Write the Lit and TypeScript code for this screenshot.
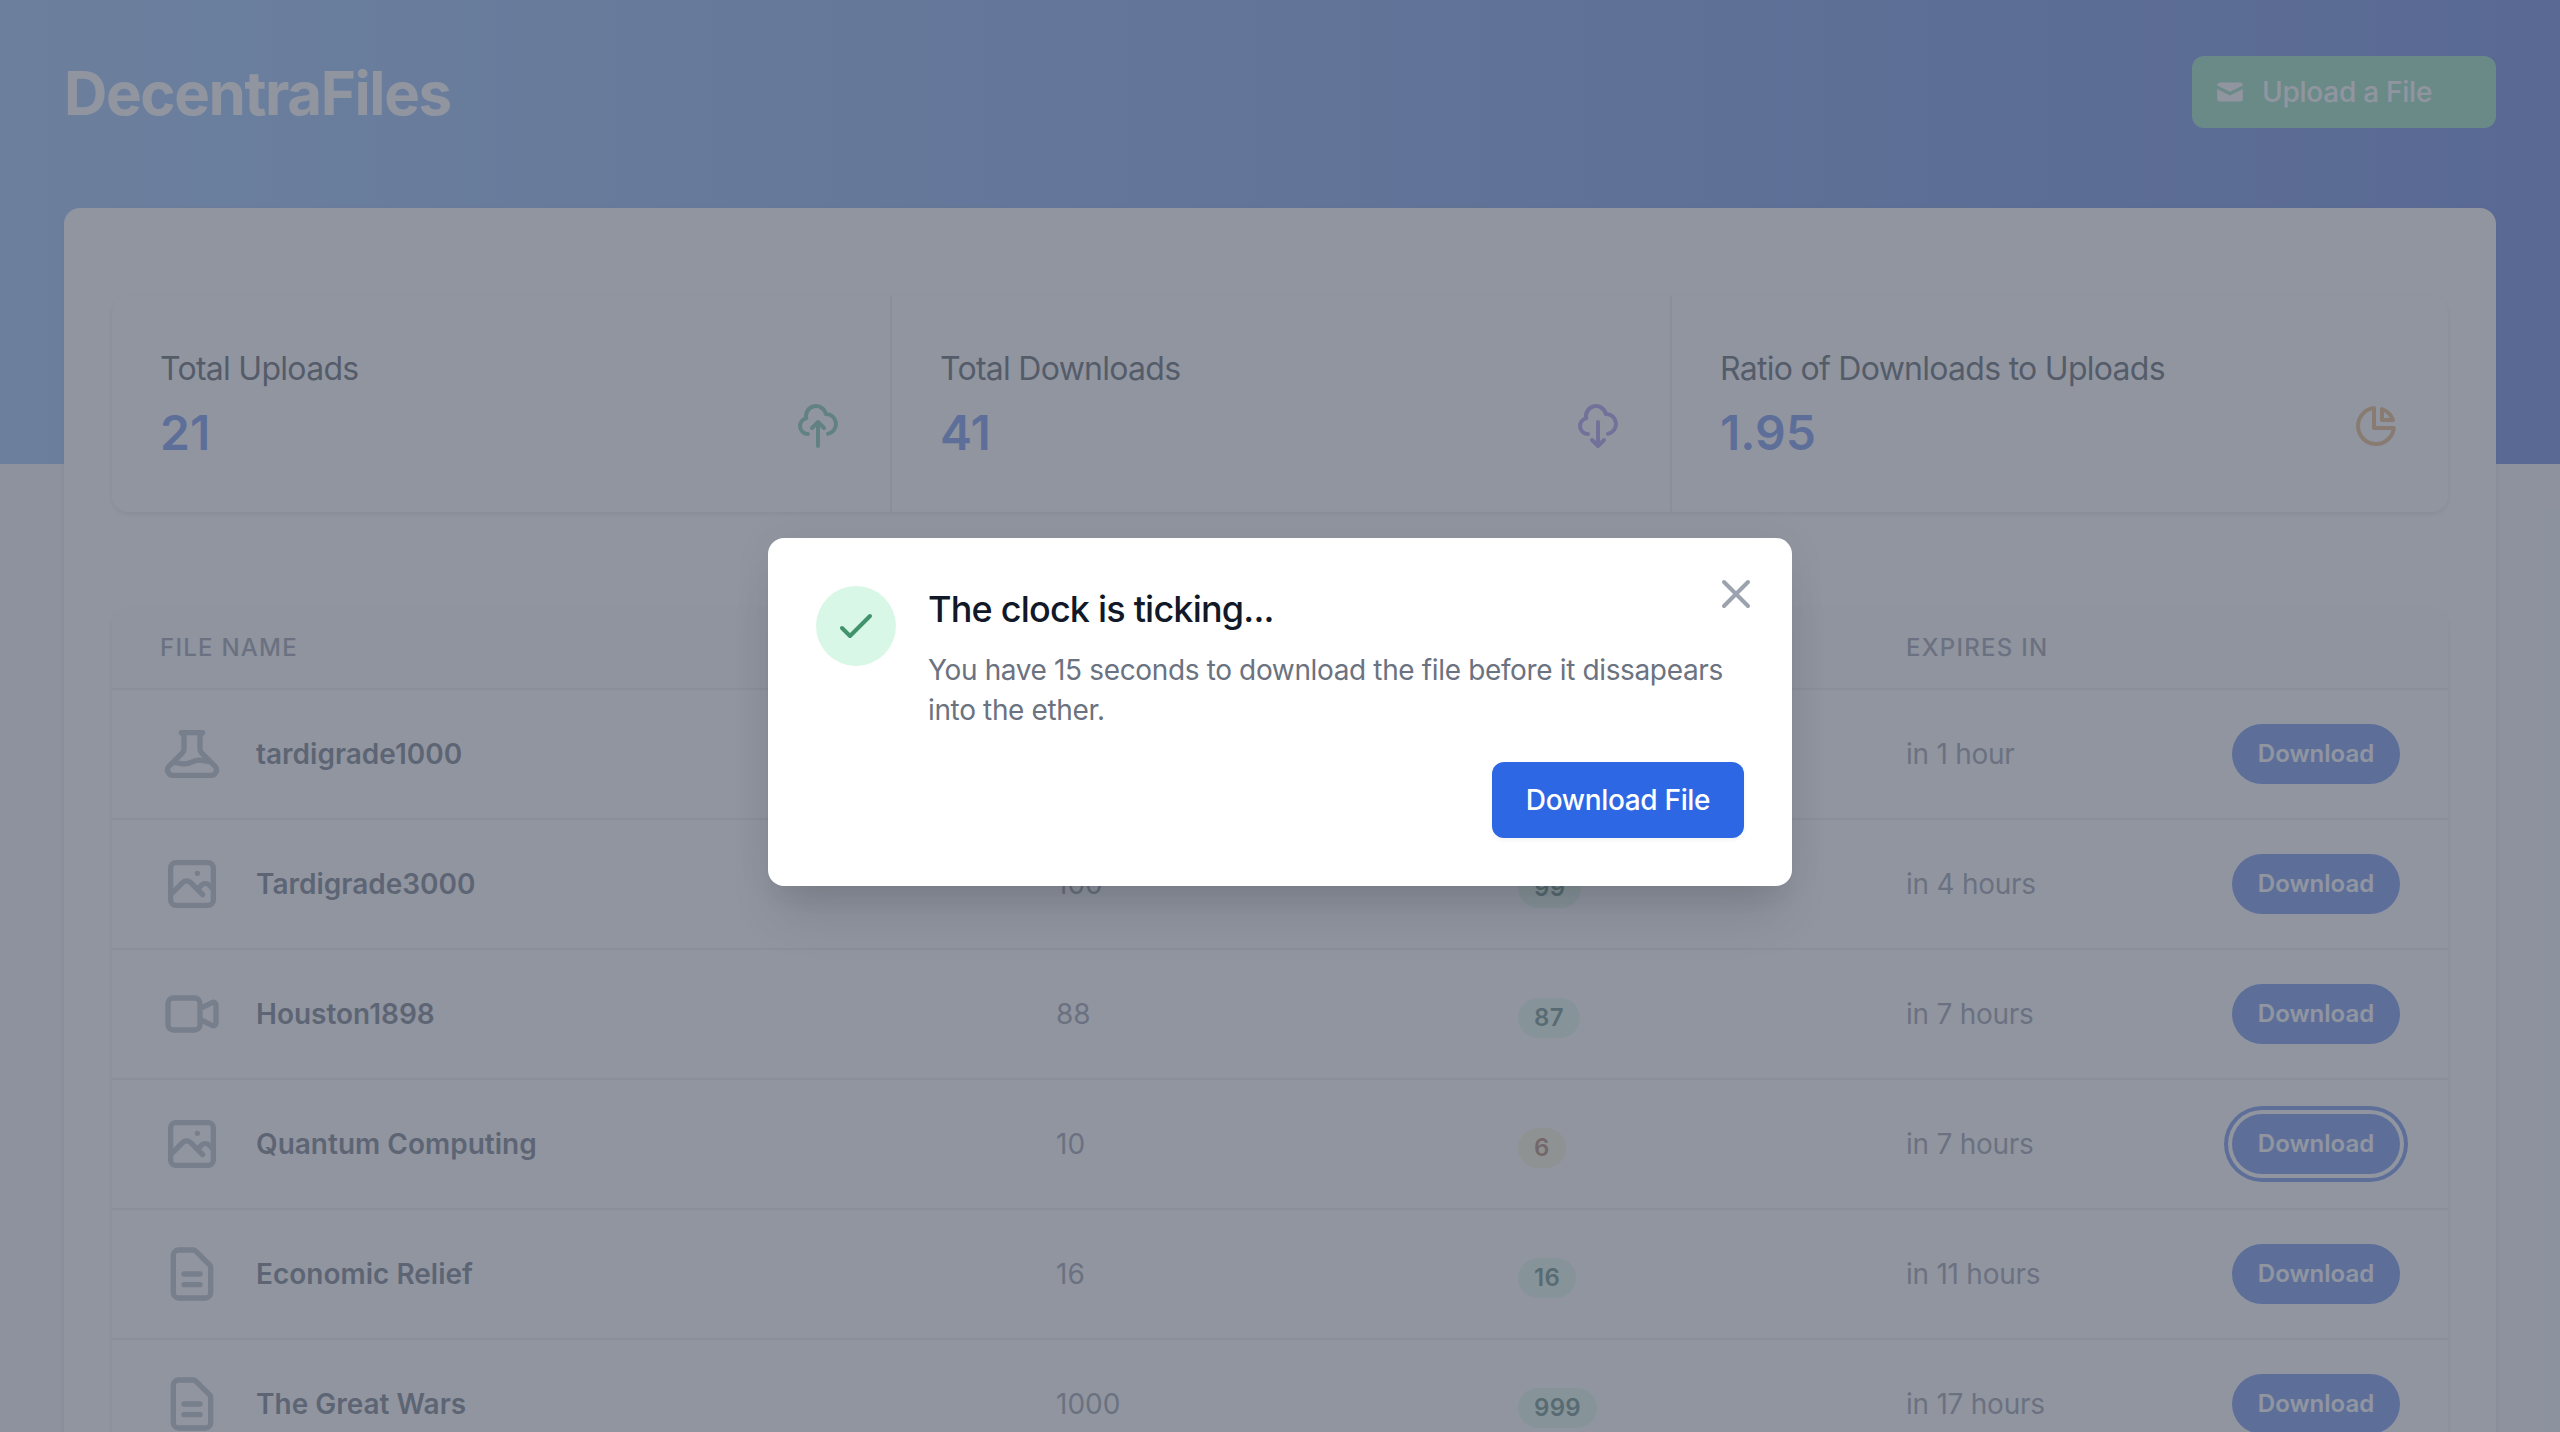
import { LitElement, html, css, svg, TemplateResult } from "lit";
import { customElement, property } from "lit/decorators.js";

const icons: Record<string, TemplateResult> = {
  beaker: svg`<path d="M19.428 15.428a2 2 0 00-1.022-.547l-2.387-.477a6 6 0 00-3.86.517l-.318.158a6 6 0 01-3.86.517L6.05 15.21a2 2 0 00-1.806.547M8 4h8l-1 1v5.172a2 2 0 00.586 1.414l5 5c1.26 1.26.367 3.414-1.415 3.414H4.828c-1.782 0-2.674-2.154-1.414-3.414l5-5A2 2 0 009 10.172V5L8 4z"/>`,
  photo: svg`<path d="M4 16l4.586-4.586a2 2 0 012.828 0L16 16m-2-2l1.586-1.586a2 2 0 012.828 0L20 14m-6-6h.01M6 20h12a2 2 0 002-2V6a2 2 0 00-2-2H6a2 2 0 00-2 2v12a2 2 0 002 2z"/>`,
  video: svg`<path d="M15 10l4.553-2.276A1 1 0 0121 8.618v6.764a1 1 0 01-1.447.894L15 14M5 18h8a2 2 0 002-2V8a2 2 0 00-2-2H5a2 2 0 00-2 2v8a2 2 0 002 2z"/>`,
  document: svg`<path d="M9 12h6m-6 4h6m2 5H7a2 2 0 01-2-2V5a2 2 0 012-2h5.586a1 1 0 01.707.293l5.414 5.414a1 1 0 01.293.707V19a2 2 0 01-2 2z"/>`,
  cloudUp: svg`<path d="M7 16a4 4 0 01-.88-7.903A5 5 0 1115.9 6L16 6a5 5 0 011 9.9M15 13l-3-3m0 0l-3 3m3-3v12"/>`,
  cloudDown: svg`<path d="M7 16a4 4 0 01-.88-7.903A5 5 0 1115.9 6L16 6a5 5 0 011 9.9M9 19l3 3m0 0l3-3m-3 3V10"/>`,
  pie: svg`<path d="M11 3.055A9.001 9.001 0 1020.945 13H11V3.055z"/><path d="M20.488 9H15V3.512A9.025 9.025 0 0120.488 9z"/>`,
  check: svg`<path d="M5 13l4 4L19 7"/>`,
  close: svg`<path d="M6 18L18 6M6 6l12 12"/>`,
};

@customElement("line-icon")
class LineIcon extends LitElement {
  static styles = css`
    :host { display: block; flex: none; }
    .glyph {
      display: block; width: 100%; height: 100%; fill: none; stroke: currentColor;
      stroke-width: 2; stroke-linecap: round; stroke-linejoin: round;
    }
  `;
  @property() name = "check";
  render() {
    return html`<svg class="glyph" viewBox="0 0 24 24">${icons[this.name]}</svg>`;
  }
}

interface FileRow {
  icon: string;
  name: string;
  limit?: string;
  left?: string;
  low?: boolean;
  expires: string;
  focused?: boolean;
}

const files: FileRow[] = [
  { icon: "beaker", name: "tardigrade1000", expires: "in 1 hour" },
  { icon: "photo", name: "Tardigrade3000", limit: "100", left: "99", expires: "in 4 hours" },
  { icon: "video", name: "Houston1898", limit: "88", left: "87", expires: "in 7 hours" },
  { icon: "photo", name: "Quantum Computing", limit: "10", left: "6", low: true, expires: "in 7 hours", focused: true },
  { icon: "document", name: "Economic Relief", limit: "16", left: "16", expires: "in 11 hours" },
  { icon: "document", name: "The Great Wars", limit: "1000", left: "999", expires: "in 17 hours" },
];

const stats = [
  { label: "Total Uploads", value: "21", icon: "cloudUp", tone: "green" },
  { label: "Total Downloads", value: "41", icon: "cloudDown", tone: "purple" },
  { label: "Ratio of Downloads to Uploads", value: "1.95", icon: "pie", tone: "orange" },
];

@customElement("app-root")
class AppRoot extends LitElement {
  static styles = css`
    :host {
      display: block; position: relative; height: 1432px; overflow: hidden;
      background: #f3f4f6; color: #111827;
      font-family: Inter, "Liberation Sans", sans-serif;
      font-size: 28px; line-height: 40px;
    }
    * { box-sizing: border-box; }
    .hero {
      height: 464px; padding: 56px 64px 0;
      background: linear-gradient(90deg, #70abf5, #2450cc);
    }
    .top { display: flex; justify-content: space-between; align-items: center; height: 72px; }
    .brand {
      margin: 0; padding-top: 2px; font-size: 60px; line-height: 72px; font-weight: 700;
      letter-spacing: -1.4px; color: #fff;
    }
    .upload {
      display: flex; align-items: center; width: 304px; height: 72px; padding: 0 22px;
      border: 0; border-radius: 12px; background: #69d2a0; color: #fff;
      font: 500 28px/40px Inter, sans-serif; letter-spacing: -.25px; gap: 16px;
    }
    .mail { width: 32px; height: 32px; fill: currentColor; }
    .panel {
      margin: -256px 64px 0; padding: 88px 48px 0; height: 1500px;
      background: #fff; border-radius: 16px;
      box-shadow: 0 2px 6px rgba(0, 0, 0, .1), 0 2px 4px rgba(0, 0, 0, .06);
    }
    .stats {
      display: grid; grid-template-columns: 778px 780px 1fr; height: 216px;
      border-radius: 16px; background: #fff;
      box-shadow: 0 2px 6px rgba(0, 0, 0, .1), 0 2px 4px rgba(0, 0, 0, .06);
    }
    .stat { padding: 49px 48px 47px; }
    .stat + .stat { border-left: 2px solid #e5e7eb; }
    .label { font-size: 32px; line-height: 48px; letter-spacing: -.72px; white-space: nowrap; }
    .figure { display: flex; justify-content: space-between; margin-top: 8px; }
    .value { font-size: 48px; line-height: 64px; font-weight: 600; color: #3468e4; }
    .figure line-icon { width: 48px; height: 48px; margin-top: 1px; }
    .green { color: #48b488; }
    .purple { color: #8570e8; }
    .orange { color: #e09a48; }
    .table {
      margin-top: 96px; border-radius: 16px; overflow: hidden;
      box-shadow: 0 2px 6px rgba(0, 0, 0, .1), 0 2px 4px rgba(0, 0, 0, .06);
    }
    .row {
      display: grid; grid-template-columns: 896px 462px 388px 1fr 264px; align-items: center;
      height: 130px; border-bottom: 2px solid #e5e7eb; background: #fff; color: #6b7280;
    }
    .row > * { padding: 0 48px; }
    .head {
      height: 82px; background: #f9fafb; font-size: 24px; line-height: 32px;
      font-weight: 500; letter-spacing: 1.25px;
    }
    .file { display: flex; align-items: center; gap: 32px; font-weight: 600; color: #374151; }
    .file line-icon { width: 64px; height: 64px; color: #9ca3af; }
    .expires { letter-spacing: -.25px; }
    .badge {
      display: inline-block; margin-top: 8px; padding: 0 16px; border-radius: 20px; background: #d6f8e4;
      color: #205848; font-size: 24px; line-height: 40px; font-weight: 600; letter-spacing: .3px; vertical-align: top;
    }
    .low { background: #fbf2cc; color: #8c4a28; }
    .action { display: flex; justify-content: flex-end; }
    .download {
      width: 168px; height: 60px; padding: 0; border: 0; border-radius: 30px;
      background: #3468e4; color: #fff; font: 600 24px/32px Inter, sans-serif;
    }
    .focused { box-shadow: 0 0 0 4px #fff, 0 0 0 8px #3468e4; }
    .backdrop { position: absolute; inset: 0; background: rgba(107, 114, 128, .75); }
    .modal {
      position: absolute; left: 768px; top: 538px; width: 1024px; height: 348px; padding: 48px;
      border-radius: 16px; background: #fff;
      box-shadow: 0 40px 50px -10px rgba(0, 0, 0, .1), 0 20px 20px -10px rgba(0, 0, 0, .04), 0 0 40px rgba(0, 0, 0, .05);
    }
    .message { display: flex; gap: 32px; }
    .circle {
      display: grid; place-items: center; flex: none; width: 80px; height: 80px;
      border-radius: 50%; background: #d9f7e6; color: #42936b;
    }
    .circle line-icon, .close { width: 48px; height: 48px; }
    .heading { margin: -1px 0 0; font-size: 36px; line-height: 48px; font-weight: 500; letter-spacing: -.8px; }
    .copy { margin: 17px 0 0; color: #6b7280; letter-spacing: -.36px; }
    .close { position: absolute; top: 32px; right: 32px; color: #9ca3af; }
    .buttons { display: flex; justify-content: flex-end; margin-top: 32px; }
    .confirm {
      width: 252px; height: 76px; padding: 0; border: 0; border-radius: 12px;
      background: #2d67e4; color: #fff; font: 500 28px/40px Inter, sans-serif; letter-spacing: -.33px;
      box-shadow: 0 2px 4px rgba(0, 0, 0, .05);
    }
  `;

  private row(f: FileRow) {
    return html`<div class="row">
      <div class="file"><line-icon name=${f.icon}></line-icon><span>${f.name}</span></div>
      <div>${f.limit}</div>
      <div>${f.left ? html`<span class="badge ${f.low ? "low" : ""}">${f.left}</span>` : null}</div>
      <div class="expires">${f.expires}</div>
      <div class="action"><button class="download ${f.focused ? "focused" : ""}">Download</button></div>
    </div>`;
  }

  render() {
    return html`
      <header class="hero">
        <div class="top">
          <h1 class="brand">DecentraFiles</h1>
          <button class="upload">
            <svg class="mail" viewBox="0 0 20 20">
              <path d="M2.003 5.884L10 9.882l7.997-3.998A2 2 0 0016 4H4a2 2 0 00-1.997 1.884z" />
              <path d="M18 8.118l-8 4-8-4V14a2 2 0 002 2h12a2 2 0 002-2V8.118z" />
            </svg>
            <span>Upload a File</span>
          </button>
        </div>
      </header>
      <main class="panel">
        <section class="stats">
          ${stats.map((s) => html`<div class="stat">
            <div class="label">${s.label}</div>
            <div class="figure"><span class="value">${s.value}</span><line-icon class=${s.tone} name=${s.icon}></line-icon></div>
          </div>`)}
        </section>
        <section class="table">
          <div class="row head"><div>FILE NAME</div><div></div><div></div><div>EXPIRES IN</div></div>
          ${files.map((f) => this.row(f))}
        </section>
      </main>
      <div class="backdrop"></div>
      <div class="modal" role="dialog">
        <line-icon class="close" name="close"></line-icon>
        <div class="message">
          <div class="circle"><line-icon name="check"></line-icon></div>
          <div>
            <h2 class="heading">The clock is ticking...</h2>
            <p class="copy">You have 15 seconds to download the file before it dissapears into the ether.</p>
          </div>
        </div>
        <div class="buttons"><button class="confirm">Download File</button></div>
      </div>
    `;
  }
}
